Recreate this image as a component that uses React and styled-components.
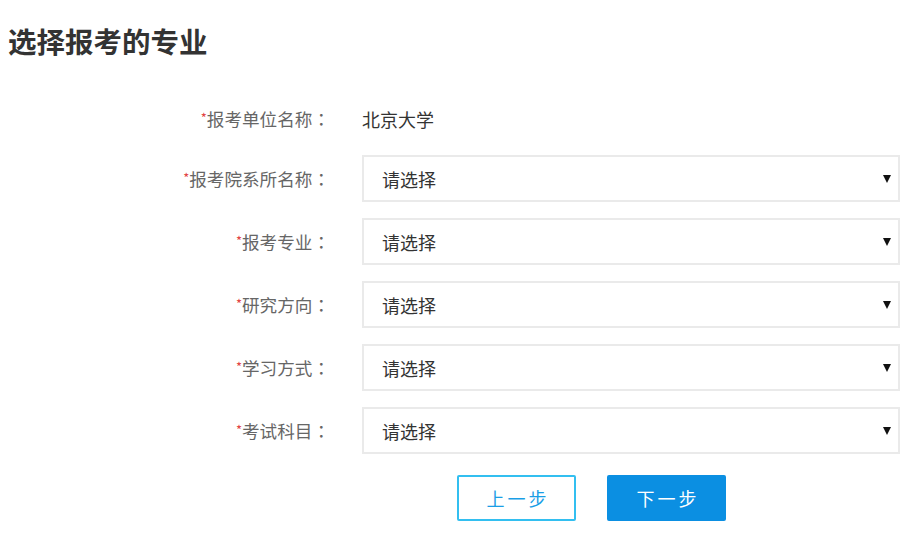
import React from "react";
import styled, { createGlobalStyle } from "styled-components";

const Global = createGlobalStyle`
  html, body { margin: 0; padding: 0; background: #fff; }
  body { font-family: "Noto Sans CJK SC", "Noto Sans", sans-serif; }
`;

const Page = styled.div`
  width: 923px;
  height: 538px;
  background: #fff;
  overflow: hidden;
`;

const Title = styled.h1`
  margin: 0;
  padding-left: 8px;
  height: 82px;
  line-height: 82px;
  font-size: 28.5px;
  font-weight: 700;
  color: #333;
`;

const Form = styled.div`
  display: flex;
  flex-direction: column;
  gap: 16px;
  padding-top: 16px;
`;

const Row = styled.div`
  display: grid;
  grid-template-columns: 330px 538px;
  column-gap: 32px;
  align-items: center;
  height: ${(p) => (p.$compact ? "41px" : "47px")};
`;

const Label = styled.div`
  text-align: right;
  font-size: 17.6px;
  color: #666;
  white-space: nowrap;
`;

const Star = styled.span`
  color: #e24444;
  font-size: 13px;
  vertical-align: 3px;
`;

const Colon = styled.span`
  font-family: "Noto Sans CJK TC", "Noto Sans CJK SC", sans-serif;
`;

const Value = styled.div`
  font-size: 18px;
  color: #333;
`;

const Select = styled.div`
  box-sizing: border-box;
  height: 47px;
  border: 2px solid #eaeaea;
  display: flex;
  align-items: center;
  justify-content: space-between;
  padding: 0 7px 0 18px;
  font-size: 18px;
  color: #333;
  background: #fff;
`;

const Arrow = styled.span`
  width: 0;
  height: 0;
  margin-top: 1px;
  border-left: 4px solid transparent;
  border-right: 4px solid transparent;
  border-top: 8px solid #111;
`;

const Actions = styled.div`
  display: flex;
  gap: 31px;
  padding-left: 457px;
  margin-top: 5px;
`;

const Button = styled.button`
  box-sizing: border-box;
  width: 119px;
  height: 46px;
  border-radius: 2px;
  font-family: inherit;
  font-size: 18px;
  letter-spacing: 3px;
  padding-left: 9px;
  cursor: pointer;
  border: 2px solid ${(p) => (p.$primary ? "#0b8fe2" : "#33bff0")};
  background: ${(p) => (p.$primary ? "#0b8fe2" : "#fff")};
  color: ${(p) => (p.$primary ? "#fff" : "#1a9ee6")};
`;

const fields = ["报考院系所名称", "报考专业", "研究方向", "学习方式", "考试科目"];

export default function App() {
  return (
    <Page>
      <Global />
      <Title>选择报考的专业</Title>
      <Form>
        <Row $compact>
          <Label>
            <Star>*</Star>报考单位名称<Colon>：</Colon>
          </Label>
          <Value>北京大学</Value>
        </Row>
        {fields.map((f) => (
          <Row key={f}>
            <Label>
              <Star>*</Star>
              {f}
              <Colon>：</Colon>
            </Label>
            <Select>
              <span>请选择</span>
              <Arrow />
            </Select>
          </Row>
        ))}
        <Actions>
          <Button>上一步</Button>
          <Button $primary>下一步</Button>
        </Actions>
      </Form>
    </Page>
  );
}
